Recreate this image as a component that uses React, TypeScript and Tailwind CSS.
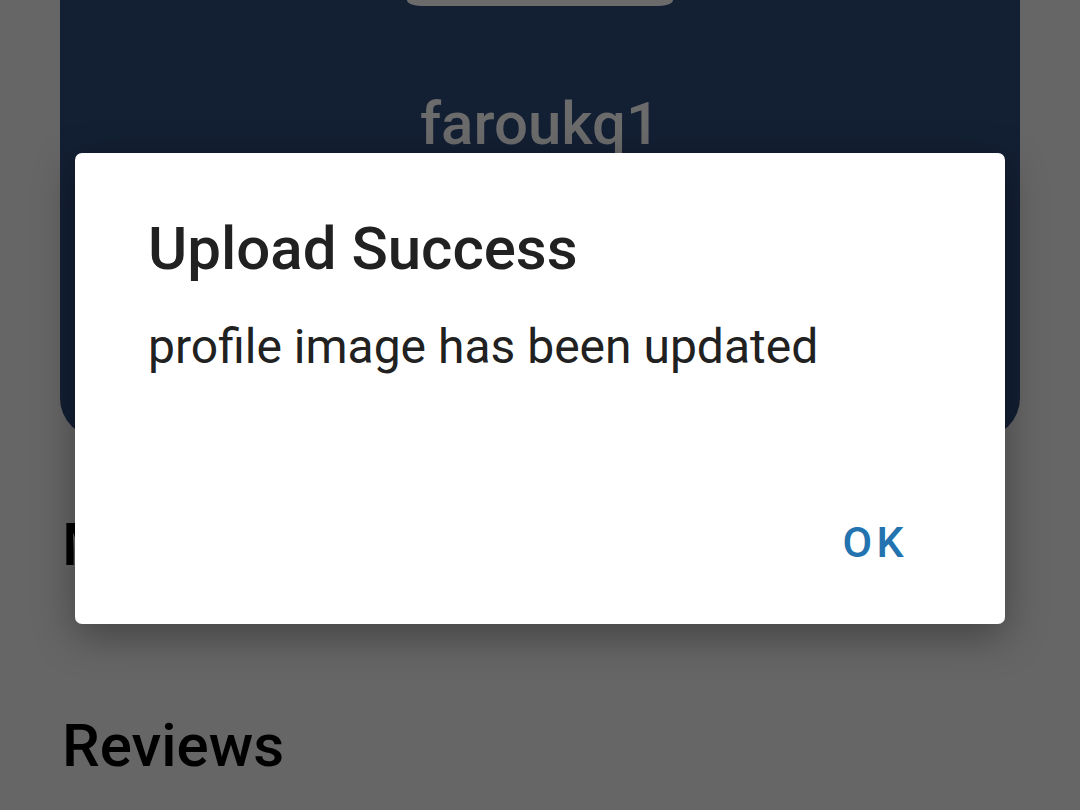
const App = () => {
  return (
    <div className="relative w-[1080px] h-[810px] overflow-hidden bg-[#666666] font-['Roboto',sans-serif]">
      {/* Profile header (dimmed behind the dialog) */}
      <div className="mx-[60px] h-[438px] bg-[#131f33] rounded-b-[40px] flex flex-col items-center">
        <div className="w-[266px] h-[6px] bg-[#6b6b6b] rounded-bl-[14px_6px] rounded-br-[14px_6px]" />
        <div className="mt-[86px] text-[60px] leading-[64px] font-medium text-[#6b6b6b]">faroukq1</div>
      </div>

      <div className="px-[62px] pt-[75px] text-[60px] leading-[64px] font-medium text-black">My Listings</div>
      <div className="px-[62px] pt-[137px] text-[60px] leading-[64px] font-medium text-black">Reviews</div>

      {/* Dialog */}
      <div className="absolute left-[75px] top-[153px] w-[930px] h-[471px] bg-white rounded-[7px] shadow-[0_12px_40px_rgba(0,0,0,0.35)] flex flex-col pl-[73px] pr-[97px]">
        <h2 className="mt-[64px] text-[60px] leading-[64px] font-medium text-[#212121]">Upload Success</h2>
        <p className="mt-[40px] text-[48px] leading-[52px] text-[#212121]">profile image has been updated</p>
        <div className="mt-auto mb-[57px] flex justify-end">
          <button className="text-[43px] leading-[50px] font-medium tracking-[0.1em] text-[#2373b0]">OK</button>
        </div>
      </div>
    </div>
  );
};

export default App;
